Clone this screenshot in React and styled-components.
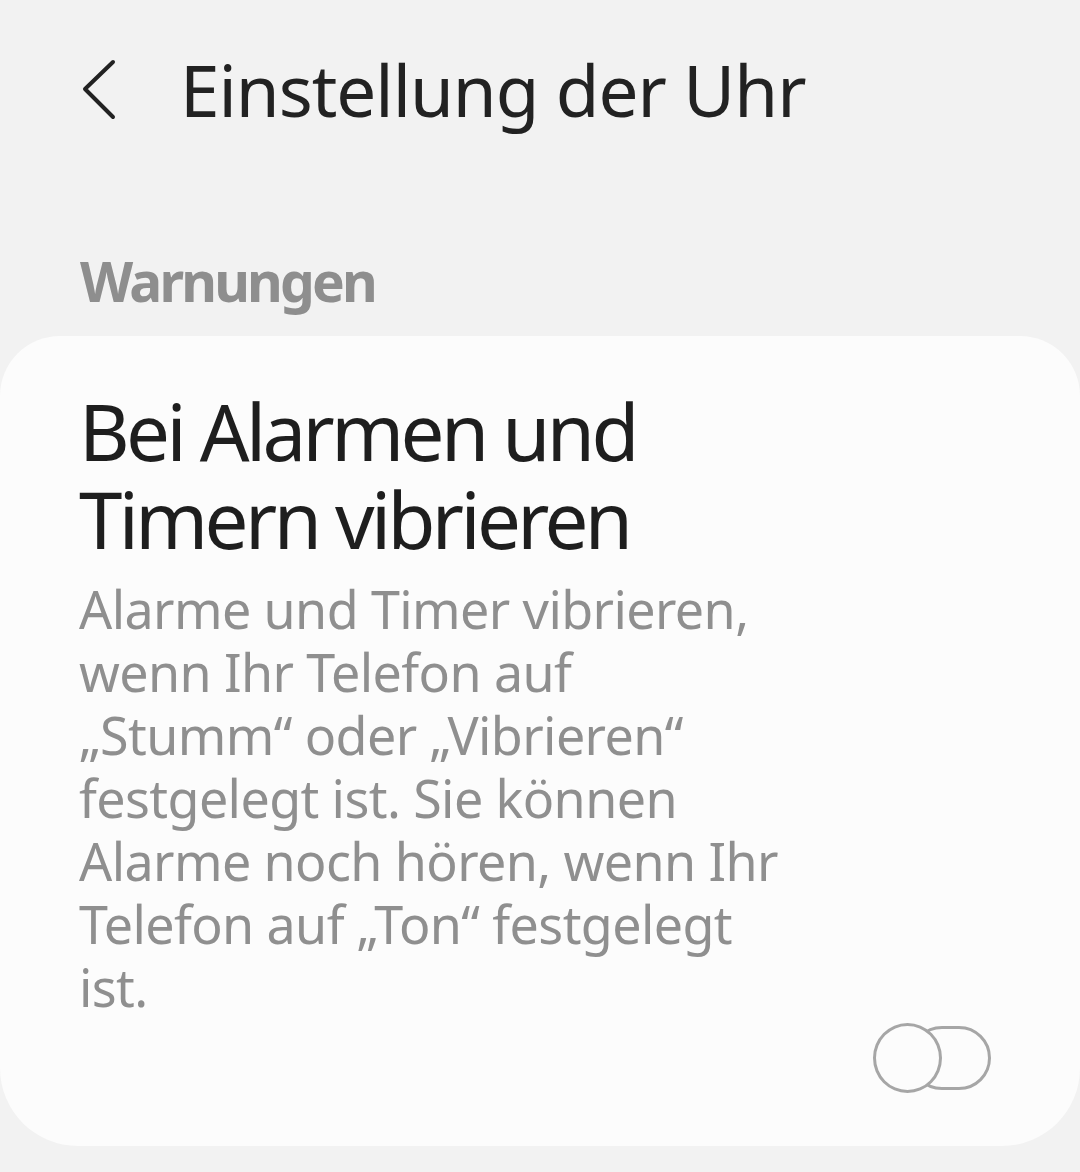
import styled, { createGlobalStyle } from 'styled-components';

const GlobalStyle = createGlobalStyle`
  html, body {
    margin: 0;
    padding: 0;
    background: #f2f2f2;
  }
  body {
    font-family: 'Noto Sans', 'Open Sans', sans-serif;
  }
`;

const Screen = styled.div`
  width: 1080px;
  height: 1172px;
  background: #f2f2f2;
  overflow: hidden;
  display: flex;
  flex-direction: column;
`;

const Header = styled.header`
  display: flex;
  align-items: center;
  padding: 42px 0 0 82px;
  height: 96px;
`;

const BackButton = styled.button`
  border: 0;
  background: none;
  padding: 0;
  width: 40px;
  height: 64px;
  display: flex;
  align-items: center;
  cursor: pointer;
`;

const Title = styled.h1`
  margin: 0 0 0 58px;
  font-size: 71px;
  line-height: 96px;
  font-weight: 400;
  color: #222;
  letter-spacing: -1px;
  white-space: nowrap;
`;

const SectionLabel = styled.h2`
  margin: 108px 0 0 80px;
  font-size: 55px;
  line-height: 70px;
  font-weight: 700;
  color: #8e8e8e;
  letter-spacing: -2.8px;
`;

const Card = styled.section`
  margin-top: 20px;
  background: #fcfcfc;
  border-radius: 60px 60px 78px 78px;
  padding: 51px 89px 53px 79px;
  display: flex;
  flex-direction: column;
`;

const ItemTitle = styled.div`
  font-size: 78px;
  line-height: 88px;
  color: #1e1e1e;
  letter-spacing: -3.6px;
  white-space: nowrap;
`;

const ItemDesc = styled.p`
  margin: 14px 0 0;
  font-size: 52px;
  line-height: 63px;
  color: #8f8f8f;
  letter-spacing: -0.6px;
  white-space: nowrap;
`;

const ToggleRow = styled.div`
  display: flex;
  justify-content: flex-end;
  margin-top: 5px;
`;

const Toggle = styled.div`
  position: relative;
  width: 118px;
  height: 70px;
  display: flex;
  align-items: center;
  justify-content: flex-end;
`;

const Track = styled.div`
  width: 81px;
  height: 64px;
  box-sizing: border-box;
  border: 3px solid #a6a6a6;
  border-radius: 32px;
`;

const Thumb = styled.div`
  position: absolute;
  left: 0;
  top: 0;
  width: 69px;
  height: 70px;
  box-sizing: border-box;
  border: 3px solid #a6a6a6;
  border-radius: 50%;
  background: #fcfcfc;
`;

export default function App() {
  return (
    <Screen>
      <GlobalStyle />
      <Header>
        <BackButton aria-label="Zurück">
          <svg width="40" height="64" viewBox="0 0 40 64">
            <path
              d="M31 4 L3 31 L31 59"
              fill="none"
              stroke="#222"
              strokeWidth="4"
              strokeLinecap="round"
              strokeLinejoin="round"
            />
          </svg>
        </BackButton>
        <Title>Einstellung der Uhr</Title>
      </Header>
      <SectionLabel>Warnungen</SectionLabel>
      <Card>
        <ItemTitle>
          Bei Alarmen und
          <br />
          Timern vibrieren
        </ItemTitle>
        <ItemDesc>
          Alarme und Timer vibrieren,
          <br />
          wenn Ihr Telefon auf
          <br />
          „Stumm“ oder „Vibrieren“
          <br />
          festgelegt ist. Sie können
          <br />
          Alarme noch hören, wenn Ihr
          <br />
          Telefon auf „Ton“ festgelegt
          <br />
          ist.
        </ItemDesc>
        <ToggleRow>
          <Toggle>
            <Track />
            <Thumb />
          </Toggle>
        </ToggleRow>
      </Card>
    </Screen>
  );
}
